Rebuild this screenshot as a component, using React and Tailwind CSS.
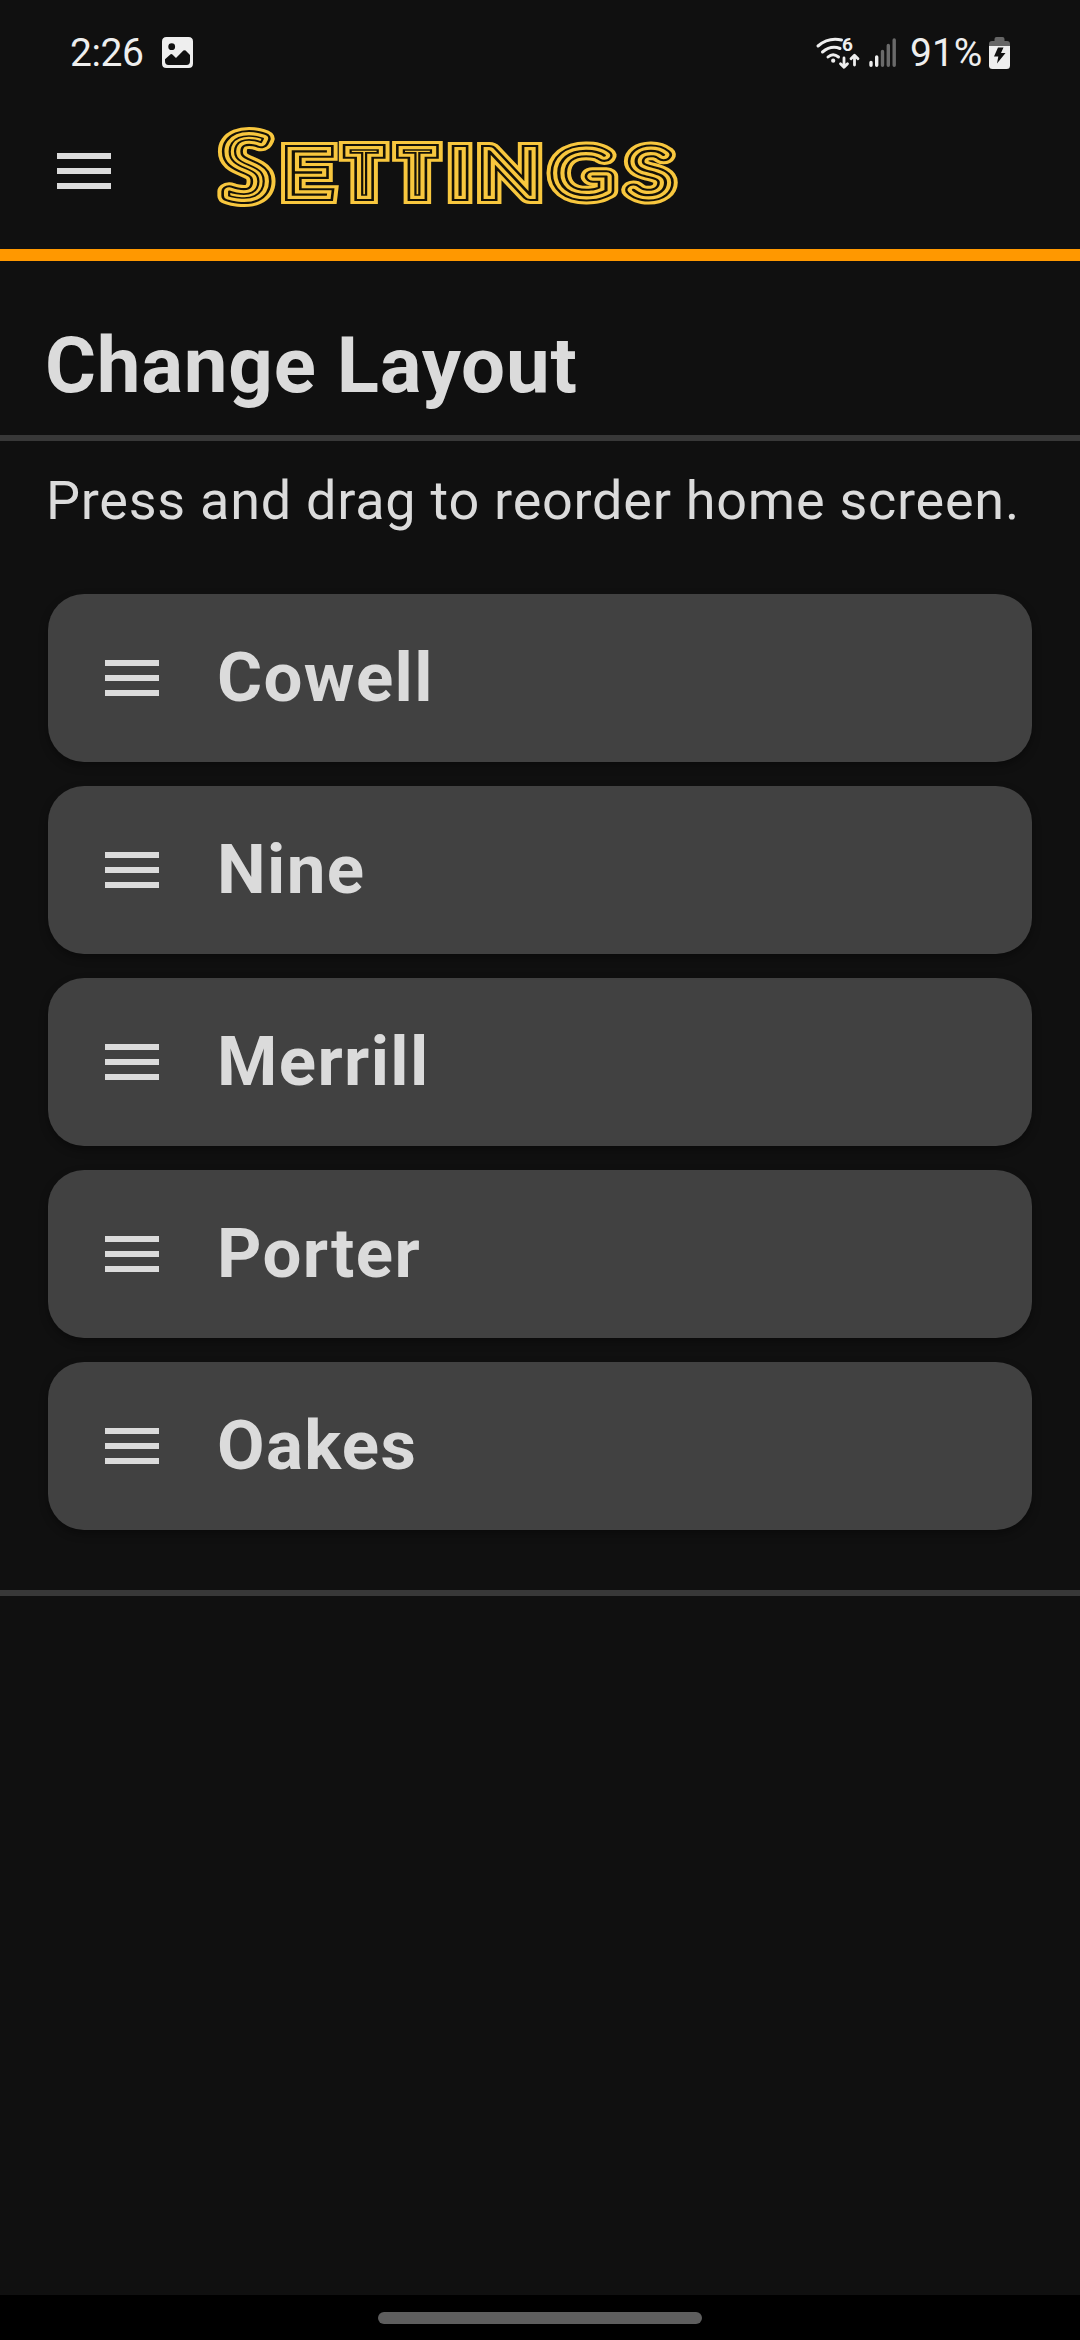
const colleges = ['Cowell', 'Nine', 'Merrill', 'Porter', 'Oakes'];

function MenuLines() {
  return (
    <div className="flex w-[54px] shrink-0 flex-col gap-[9px]">
      <div className="h-1.5 bg-[#dbdbdb]" />
      <div className="h-1.5 bg-[#dbdbdb]" />
      <div className="h-1.5 bg-[#dbdbdb]" />
    </div>
  );
}

function StatusBar() {
  return (
    <div className="flex h-[105px] items-center pl-[70px] text-[39px] leading-none text-[#eeeeee]">
      <span className="w-[92px] pt-0.5 tracking-[-0.4px]">2:26</span>
      <svg className="h-[31px] w-[31px]" viewBox="0 0 31 31">
        <path
          fillRule="evenodd"
          fill="#eeeeee"
          d="M4.5 0H26.5Q31 0 31 4.5V26.5Q31 31 26.5 31H4.5Q0 31 0 26.5V4.5Q0 0 4.5 0ZM9.7 6.3A3.4 3.4 0 1 0 9.7 13.1A3.4 3.4 0 1 0 9.7 6.3ZM3 24V22.2L8.6 17.3Q9.5 16.8 10.4 17.4L14 21L21.4 13.6Q22.5 12.8 23.6 13.6L28 18V24Q28 28 24.5 28H6.5Q3 28 3 24Z"
        />
      </svg>
      <svg className="ml-[619px] h-[40px] w-[88px]" viewBox="812 32 88 40" fill="none" stroke="#eeeeee" strokeLinecap="round">
        <path strokeWidth="3" d="M818 45Q828.5 36 841.5 39M822.5 51Q831 44 840 47.5M828 56Q833 51.5 838.5 56" />
        <circle cx="833.2" cy="59.7" r="2.1" fill="#eeeeee" stroke="none" />
        <text x="842" y="50" fontSize="19" fontWeight="700" fill="#eeeeee" stroke="none">6</text>
        <path strokeWidth="2.8" strokeLinejoin="round" d="M844 57V66M840.5 62.7L844 66.3L847.5 62.7M854.5 64V54.5M851 57.8L854.5 54.2L858 57.8" />
        <path strokeWidth="3.4" d="M871 61.5V64.2M876.7 56V64.2" />
        <path strokeWidth="3.4" stroke="#6a6a6a" d="M882.5 50.5V64.2M888.3 44.5V64.2M894.2 39V64.2" />
      </svg>
      <span className="ml-[10px] w-[79px] pt-0.5">91%</span>
      <svg className="h-[32px] w-[21px]" viewBox="0 0 21 32">
        <path fill="#666666" d="M5.5 4V2Q5.5 0 7.5 0H13.5Q15.5 0 15.5 2V4H18Q21 4 21 7V9H0V7Q0 4 3 4Z" />
        <path fill="#eeeeee" d="M0 9H21V28.5Q21 32 17.5 32H3.5Q0 32 0 28.5Z" />
        <path fill="#101010" d="M9 10.5H14.5L12 16H16.5L8 26.5L9.3 19.5H5Z" />
      </svg>
    </div>
  );
}

// Title lettering: hairline text wrapped in alternating gold and dark strokes.
function Title() {
  return (
    <svg className="ml-[97px] h-[96px] w-[480px] shrink-0 overflow-visible" viewBox="0 0 480 96" role="img" aria-label="Settings">
      <g transform="scale(1.3 1)" fill="none">
        <use href="#title-text" stroke="#f8c73e" strokeWidth="21" />
        <use href="#title-text" stroke="#151207" strokeWidth="14" />
        <use href="#title-text" stroke="#f8c73e" strokeWidth="9.3" />
        <g stroke="#151207" strokeWidth="2">
          <text
            id="title-text"
            y="72"
            x="12.9 58 109.2 150.2 186.4 208.8 265.2 323.4"
            fontSize="62"
            strokeMiterlimit="2"
            className="font-['Lato',sans-serif] font-thin [vector-effect:non-scaling-stroke] [&_tspan]:[vector-effect:non-scaling-stroke]"
          >
            <tspan fontSize="84" dy="2" strokeLinejoin="round" className="font-['Open_Sans',sans-serif] [font-stretch:75%]">S</tspan><tspan dy="-2">E</tspan><tspan className="font-['Open_Sans',sans-serif] [font-stretch:75%]">TT</tspan>IN<tspan strokeLinejoin="round">GS</tspan>
          </text>
        </g>
      </g>
    </svg>
  );
}

export default function App() {
  return (
    <div className="flex h-[2340px] w-[1080px] flex-col overflow-hidden bg-[#101010] font-['Roboto',sans-serif] text-[#dbdbdb]">
      <StatusBar />
      <header className="flex h-[156px] items-center border-b-[12px] border-[#ff9800] pb-[12px] pl-[57px]">
        <MenuLines />
        <Title />
      </header>
      <main className="flex flex-1 flex-col">
        <h1 className="h-[180px] border-b-[6px] border-[#383838] pt-[59px] pl-[45px] text-[78px] leading-[92px] font-bold tracking-[0.78px]">
          Change Layout
        </h1>
        <p className="pt-[28px] pl-[46px] text-[54px] leading-[64px] tracking-[0.74px] whitespace-nowrap">
          Press and drag to reorder home screen.
        </p>
        <ul className="mt-[61px] flex flex-col gap-6 border-b-[6px] border-[#383838] px-12 pb-[60px]">
          {colleges.map((name) => (
            <li key={name} className="flex h-[168px] items-center rounded-[36px] bg-[#414141] pl-[57px] shadow-[0_4px_8px_rgba(0,0,0,0.35)]">
              <MenuLines />
              <span className="ml-[58px] text-[69px] leading-[80px] font-bold tracking-[1.38px]">{name}</span>
            </li>
          ))}
        </ul>
      </main>
      <footer className="flex h-[45px] items-start justify-center bg-black pt-[17px]">
        <div className="h-3 w-[324px] rounded-full bg-[#5e5e5e]" />
      </footer>
    </div>
  );
}
